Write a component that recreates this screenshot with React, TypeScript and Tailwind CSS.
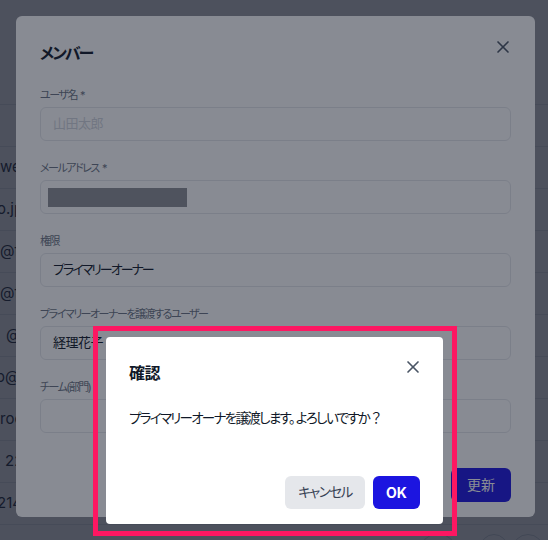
import { X } from "lucide-react";

type RowProps = {
  text: string;
  offset: string;
};

const rows: RowProps[] = [
  { text: "web@example.co.jp", offset: "ml-0" },
  { text: "o.jp", offset: "-ml-[3px]" },
  { text: "@fr", offset: "ml-0" },
  { text: "@fr", offset: "ml-0" },
  { text: " @", offset: "ml-[6px]" },
  { text: "o@", offset: "-ml-[4px]" },
  { text: "roo", offset: "ml-0" },
  { text: " 22", offset: "ml-[5px]" },
  { text: "214", offset: "-ml-[3px]" },
];

function TableRow({ text, offset }: RowProps) {
  return (
    <div className="flex h-[42px] items-center border-b border-gray-200 text-[15px] text-gray-800">
      <span className={`${offset} whitespace-nowrap`}>{text}</span>
    </div>
  );
}

type FieldProps = {
  label: string;
  children?: React.ReactNode;
};

function Field({ label, children }: FieldProps) {
  return (
    <div className="flex flex-col">
      <label className="mb-1 whitespace-pre text-[11px] leading-4 tracking-[-1.5px] text-gray-500">{label}</label>
      <div className="flex h-[34px] items-center rounded-md border border-gray-200 px-3 text-[13px] tracking-[-2px]">
        {children}
      </div>
    </div>
  );
}

export default function App() {
  return (
    <div className="relative h-[540px] w-[548px] overflow-hidden bg-white font-['Inter','Noto_Sans_CJK_JP',sans-serif] [font-feature-settings:'palt']">
      {/* page behind */}
      <div className="pt-[104px]">
        <div className="h-[43px] border-y border-gray-200" />
        {rows.map((r, i) => (
          <TableRow key={i} {...r} />
        ))}
        <div className="flex justify-end gap-1 pr-1 pt-[9px]">
          <div className="h-8 w-9 rounded-full border border-gray-300" />
          <div className="ml-5 h-8 w-7 rounded-full border border-gray-300" />
          <div className="h-8 w-8 rounded-full border border-gray-300" />
        </div>
      </div>

      <div className="absolute inset-0 bg-[#111827]/50" />

      {/* member modal */}
      <div className="absolute left-4 top-4 flex h-[501px] w-[519px] flex-col rounded-md bg-white px-6 pt-[23px]">
        <div className="flex items-start justify-between">
          <h2 className="text-base font-bold leading-7 tracking-[-2px] text-gray-900">メンバー</h2>
          <X className="-mr-[2px] -mt-[2px] text-gray-600" size={20} strokeWidth={2} />
        </div>
        <div className="mt-5 flex flex-col gap-[19px]">
          <Field label="ユーザ名  *">
            <span className="tracking-[-0.5px] text-gray-300">山田太郎</span>
          </Field>
          <Field label="メールアドレス  *">
            <div className="-ml-[5px] h-[19px] w-[139px] bg-[#8d8e95]" />
          </Field>
          <Field label="権限">
            <span className="text-gray-900">プライマリーオーナー</span>
          </Field>
          <Field label="プライマリーオーナーを譲渡するユーザー">
            <span className="tracking-[-0.5px] text-gray-900">経理花子</span>
          </Field>
          <Field label="チーム(部門)" />
        </div>
        <div className="mt-[35px] flex justify-end">
          <button className="h-[34px] rounded-md bg-[#1c15e0] px-4 text-sm text-white">更新</button>
        </div>
      </div>

      <div className="absolute inset-0 bg-[#111827]/50" />

      {/* confirm dialog */}
      <div className="absolute left-[106px] top-[337px] flex h-[187px] w-[337px] flex-col rounded bg-white px-[23px] pb-[15px] pt-[22px]">
        <div className="flex items-start justify-between">
          <h3 className="text-base font-bold leading-7 tracking-[-0.5px] text-gray-900">確認</h3>
          <X className="-mr-[3px] -mt-[2px] text-gray-600" size={20} strokeWidth={2} />
        </div>
        <p className="mt-[21px] whitespace-nowrap text-[13.5px] leading-5 tracking-[-1.7px] text-gray-900">
          プライマリーオーナを譲渡します。 よろしいですか ？
        </p>
        <div className="mt-auto flex justify-end gap-2">
          <button className="h-[33px] w-20 rounded-md bg-gray-200 text-[13.5px] tracking-[-1.5px] text-gray-700">キャンセル</button>
          <button className="h-[33px] w-[47px] rounded-md bg-[#1c15e0] text-sm font-bold text-white">OK</button>
        </div>
      </div>

      {/* annotation frame */}
      <div className="pointer-events-none absolute left-[93px] top-[326px] h-[210px] w-[364px] border-[5px] border-[#fd1762]" />
    </div>
  );
}
